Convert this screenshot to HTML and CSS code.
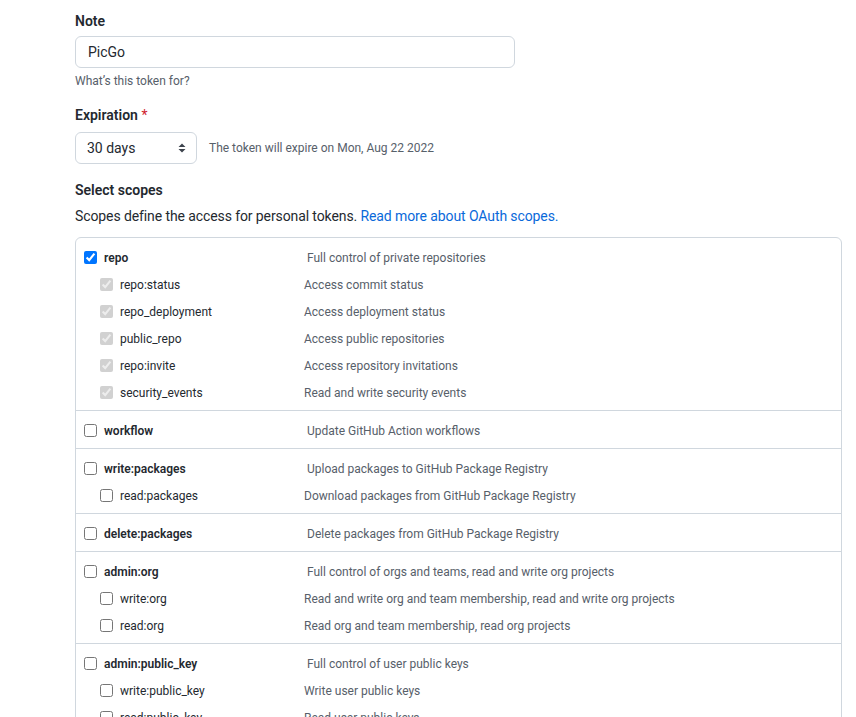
FILE: index.html
```html
<!DOCTYPE html>
<html lang="en">
<head>
<meta charset="utf-8">
<title>New personal access token</title>
<link rel="stylesheet" href="styles.css">
</head>
<body>
<form class="page">
  <div class="form-group">
    <label class="field-label first" for="note">Note</label>
    <input class="text-input" id="note" type="text" value="PicGo">
    <p class="note">What’s this token for?</p>
  </div>

  <div class="form-group">
    <label class="field-label" for="exp">Expiration <span class="req">*</span></label>
    <div class="exp-row">
      <div class="select-wrap">
        <select class="select" id="exp">
          <option>30 days</option>
        </select>
        <svg class="select-arrows" width="8" height="10" viewBox="0 0 8 10" aria-hidden="true"><path d="M0.5 4 L4 0.5 L7.5 4 Z M0.5 6 L4 9.5 L7.5 6 Z" fill="#3d444d"/></svg>
      </div>
      <span class="exp-note">The token will expire on Mon, Aug 22 2022</span>
    </div>
  </div>

  <h3 class="field-label scopes-title">Select scopes</h3>
  <p class="scopes-desc">Scopes define the access for personal tokens. <a href="#" class="link">Read more about OAuth scopes.</a></p>

  <div class="scopes">
    <div class="group">
      <div class="row main"><label class="lbl"><input type="checkbox" checked><span>repo</span></label><span class="desc">Full control of private repositories</span></div>
      <div class="row sub"><label class="lbl"><input type="checkbox" checked disabled><span>repo:status</span></label><span class="desc">Access commit status</span></div>
      <div class="row sub"><label class="lbl"><input type="checkbox" checked disabled><span>repo_deployment</span></label><span class="desc">Access deployment status</span></div>
      <div class="row sub"><label class="lbl"><input type="checkbox" checked disabled><span>public_repo</span></label><span class="desc">Access public repositories</span></div>
      <div class="row sub"><label class="lbl"><input type="checkbox" checked disabled><span>repo:invite</span></label><span class="desc">Access repository invitations</span></div>
      <div class="row sub"><label class="lbl"><input type="checkbox" checked disabled><span>security_events</span></label><span class="desc">Read and write security events</span></div>
    </div>
    <div class="group">
      <div class="row main"><label class="lbl"><input type="checkbox"><span>workflow</span></label><span class="desc">Update GitHub Action workflows</span></div>
    </div>
    <div class="group">
      <div class="row main"><label class="lbl"><input type="checkbox"><span>write:packages</span></label><span class="desc">Upload packages to GitHub Package Registry</span></div>
      <div class="row sub"><label class="lbl"><input type="checkbox"><span>read:packages</span></label><span class="desc">Download packages from GitHub Package Registry</span></div>
    </div>
    <div class="group">
      <div class="row main"><label class="lbl"><input type="checkbox"><span>delete:packages</span></label><span class="desc">Delete packages from GitHub Package Registry</span></div>
    </div>
    <div class="group">
      <div class="row main"><label class="lbl"><input type="checkbox"><span>admin:org</span></label><span class="desc">Full control of orgs and teams, read and write org projects</span></div>
      <div class="row sub"><label class="lbl"><input type="checkbox"><span>write:org</span></label><span class="desc">Read and write org and team membership, read and write org projects</span></div>
      <div class="row sub"><label class="lbl"><input type="checkbox"><span>read:org</span></label><span class="desc">Read org and team membership, read org projects</span></div>
    </div>
    <div class="group">
      <div class="row main"><label class="lbl"><input type="checkbox"><span>admin:public_key</span></label><span class="desc">Full control of user public keys</span></div>
      <div class="row sub"><label class="lbl"><input type="checkbox"><span>write:public_key</span></label><span class="desc">Write user public keys</span></div>
      <div class="row sub"><label class="lbl"><input type="checkbox"><span>read:public_key</span></label><span class="desc">Read user public keys</span></div>
    </div>
    <div class="group">
      <div class="row main"><label class="lbl"><input type="checkbox"><span>admin:repo_hook</span></label><span class="desc">Full control of repository hooks</span></div>
    </div>
  </div>
</form>
</body>
</html>
```

FILE: styles.css
```css
* { box-sizing: border-box; }

html, body {
  margin: 0;
  padding: 0;
  background: #ffffff;
}

body {
  font-family: Roboto, "Liberation Sans", sans-serif;
  font-size: 14px;
  line-height: 21px;
  color: #24292f;
}

.page {
  padding: 11px 14px 0 75px;
}

.form-group {
  margin-bottom: 15px;
}

.field-label {
  display: block;
  font-size: 14px;
  font-weight: 600;
  line-height: 21px;
  margin: 0 0 6px 0;
}

.field-label.first { margin-bottom: 4px; }

.req { color: #cf222e; font-weight: 400; }

.text-input {
  display: block;
  width: 440px;
  height: 32px;
  padding: 0 12px;
  font-family: inherit;
  font-size: 14px;
  color: #24292f;
  background: #ffffff;
  border: 1px solid #d0d7de;
  border-radius: 6px;
  outline: none;
}

.note {
  margin: 4px 0 0 0;
  font-size: 12px;
  line-height: 18px;
  color: #57606a;
}

.exp-row {
  display: flex;
  align-items: center;
  gap: 12px;
}

.select-wrap {
  position: relative;
  width: 122px;
  height: 32px;
}

.select {
  appearance: none;
  -webkit-appearance: none;
  width: 100%;
  height: 100%;
  padding: 0 24px 0 11px;
  font-family: inherit;
  font-size: 14px;
  color: #24292f;
  background: #ffffff;
  border: 1px solid #d0d7de;
  border-radius: 6px;
  outline: none;
}

.select-arrows {
  position: absolute;
  right: 11px;
  top: 11px;
  pointer-events: none;
}

.exp-note {
  font-size: 12px;
  line-height: 18px;
  color: #57606a;
}

.scopes-title {
  margin: 16px 0 0 0;
}

.scopes-desc {
  margin: 5px 0 10px 0;
  font-size: 14px;
  line-height: 21px;
  letter-spacing: -0.1px;
}

.link { color: #0969da; text-decoration: none; }

.scopes {
  border: 1px solid #d0d7de;
  border-radius: 6px;
}

.group {
  padding: 5px 8px;
}

.group + .group {
  border-top: 1px solid #d0d7de;
}

.row {
  display: flex;
  align-items: center;
  height: 27px;
  padding-top: 2px;
  font-size: 12px;
  line-height: 18px;
}

.lbl {
  display: flex;
  align-items: center;
  gap: 7px;
  flex: none;
}

.lbl input {
  margin: 0;
  width: 13px;
  height: 13px;
  flex: none;
}

.main .lbl { width: 223px; font-weight: 600; }

.sub { padding-left: 16px; }
.sub .lbl { width: 204px; }

.desc { color: #57606a; }
```
